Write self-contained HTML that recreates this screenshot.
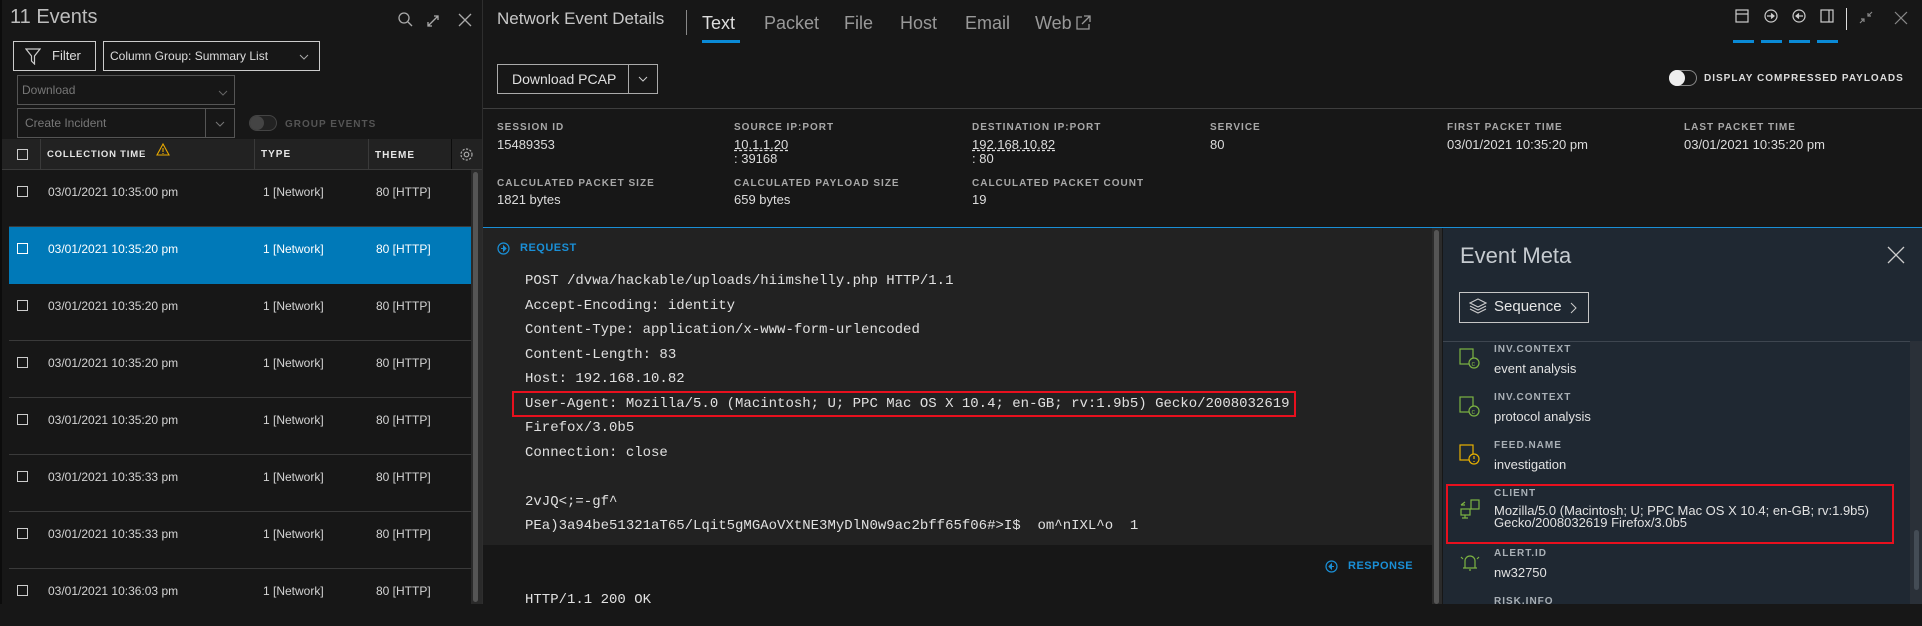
<!DOCTYPE html>
<html><head><meta charset="utf-8"><style>
*{margin:0;padding:0;box-sizing:border-box}
body{width:1922px;height:604px;background:#171717;overflow:hidden;position:relative;font-family:"Liberation Sans",sans-serif;color:#d0d0d0}
.a{position:absolute;white-space:nowrap}
.lbl{font-size:10px;font-weight:bold;letter-spacing:1px;color:#a8a8a8}
.val{font-size:13px;color:#dcdcdc}
.row{position:absolute;left:9px;width:462px;height:57px;border-bottom:1px solid #3a3a3a;font-size:12px;color:#d4d4d4}
.row span{position:absolute;top:15px}
.cb{position:absolute;left:8px;top:16px;width:11px;height:11px;border:1.5px solid #ccc}
.mono{font-family:"Liberation Mono",monospace;font-size:14px;letter-spacing:0;color:#e0e0e0}
.ml{font-size:10px;font-weight:bold;letter-spacing:1px;color:#a9b0b6}
.mv{font-size:13px;color:#e2e2e2}
.tab{font-size:18px;color:#999;top:13px}
</style></head><body>
<!-- left panel -->
<div class="a" style="left:0;top:0;width:2px;height:604px;background:#0c0c0c"></div>
<div class="a" style="left:10px;top:6px;font-size:20px;color:#bdbdbd;font-weight:300">11 Events</div>
<svg class="a" style="left:398px;top:12px" width="80" height="16" fill="none" stroke="#aaa" stroke-width="1.3"><circle cx="6" cy="6" r="5"/><path d="M10 10l4 4"/><path d="M30 14l10-10M36 4h4v4M30 10v4h4"/><path d="M61 2l12 12M73 2L61 14"/></svg>
<div class="a" style="left:13px;top:41px;width:83px;height:30px;border:1px solid #ccc"></div>
<svg class="a" style="left:25px;top:48px" width="16" height="17" fill="none" stroke="#ccc" stroke-width="1.2"><path d="M1 1h14L9.5 8v8L6.5 13V8z"/></svg>
<div class="a" style="left:52px;top:48px;font-size:13px;color:#ddd">Filter</div>
<div class="a" style="left:103px;top:41px;width:217px;height:30px;border:1px solid #ccc"></div>
<div class="a" style="left:110px;top:49px;font-size:12px;color:#ddd">Column Group: Summary List</div>
<svg class="a" style="left:299px;top:54px" width="10" height="6" fill="none" stroke="#aaa"><path d="M1 1l4 4 4-4"/></svg>
<div class="a" style="left:17px;top:75px;width:218px;height:30px;border:1px solid #555"></div>
<div class="a" style="left:22px;top:83px;font-size:12px;color:#777">Download</div>
<svg class="a" style="left:218px;top:90px" width="10" height="6" fill="none" stroke="#666"><path d="M1 1l4 4 4-4"/></svg>
<div class="a" style="left:17px;top:108px;width:218px;height:30px;border:1px solid #555"></div>
<div class="a" style="left:205px;top:108px;width:1px;height:30px;background:#555"></div>
<div class="a" style="left:25px;top:116px;font-size:12px;color:#777">Create Incident</div>
<svg class="a" style="left:215px;top:121px" width="10" height="6" fill="none" stroke="#777"><path d="M1 1l4 4 4-4"/></svg>
<div class="a" style="left:249px;top:115px;width:28px;height:16px;border-radius:8px;border:1px solid #444;background:#222"></div>
<div class="a" style="left:250px;top:116px;width:14px;height:14px;border-radius:7px;background:#444"></div>
<div class="a lbl" style="left:285px;top:119px;color:#555">GROUP EVENTS</div>
<div class="a" style="left:2px;top:139px;width:480px;height:31px;background:#222;border-bottom:1px solid #3a3a3a"></div>
<div class="a" style="left:17px;top:149px;width:11px;height:11px;border:1.5px solid #ccc"></div>
<div class="a" style="left:40px;top:139px;width:1px;height:30px;background:#3a3a3a"></div>
<div class="a" style="left:254px;top:139px;width:1px;height:30px;background:#3a3a3a"></div>
<div class="a" style="left:368px;top:139px;width:1px;height:30px;background:#3a3a3a"></div>
<div class="a" style="left:451px;top:139px;width:1px;height:30px;background:#0c0c0c"></div>
<div class="a lbl" style="left:47px;top:149px;color:#e6e6e6;font-size:9.5px;letter-spacing:.8px">COLLECTION TIME</div>
<svg class="a" style="left:156px;top:143px" width="14" height="13" fill="none" stroke="#e8a900" stroke-width="1.1"><path d="M7 1L13 12H1z M7 5v4M7 10v1"/></svg>
<div class="a lbl" style="left:261px;top:149px;color:#e6e6e6">TYPE</div>
<div class="a lbl" style="left:375px;top:150px;color:#e6e6e6">THEME</div>
<svg class="a" style="left:459px;top:147px" width="15" height="15" fill="none" stroke="#aaa" stroke-width="1.2"><circle cx="7.5" cy="7.5" r="2.3"/><circle cx="7.5" cy="7.5" r="5.5" stroke-dasharray="2.2 1.4"/></svg>
<div class="row" style="top:170px"><div class="cb"></div><span style="left:39px">03/01/2021 10:35:00 pm</span><span style="left:254px">1 [Network]</span><span style="left:367px">80 [HTTP]</span></div>
<div class="row" style="top:227px;background:#0079b8;color:#fff;border-bottom:none"><div class="cb" style="border-color:#fff"></div><span style="left:39px">03/01/2021 10:35:20 pm</span><span style="left:254px">1 [Network]</span><span style="left:367px">80 [HTTP]</span></div>
<div class="row" style="top:284px"><div class="cb"></div><span style="left:39px">03/01/2021 10:35:20 pm</span><span style="left:254px">1 [Network]</span><span style="left:367px">80 [HTTP]</span></div>
<div class="row" style="top:341px"><div class="cb"></div><span style="left:39px">03/01/2021 10:35:20 pm</span><span style="left:254px">1 [Network]</span><span style="left:367px">80 [HTTP]</span></div>
<div class="row" style="top:398px"><div class="cb"></div><span style="left:39px">03/01/2021 10:35:20 pm</span><span style="left:254px">1 [Network]</span><span style="left:367px">80 [HTTP]</span></div>
<div class="row" style="top:455px"><div class="cb"></div><span style="left:39px">03/01/2021 10:35:33 pm</span><span style="left:254px">1 [Network]</span><span style="left:367px">80 [HTTP]</span></div>
<div class="row" style="top:512px"><div class="cb"></div><span style="left:39px">03/01/2021 10:35:33 pm</span><span style="left:254px">1 [Network]</span><span style="left:367px">80 [HTTP]</span></div>
<div class="row" style="top:569px;border:none"><div class="cb"></div><span style="left:39px">03/01/2021 10:36:03 pm</span><span style="left:254px">1 [Network]</span><span style="left:367px">80 [HTTP]</span></div>
<div class="a" style="left:471px;top:170px;width:11px;height:434px;background:#2a2a2a"></div>
<div class="a" style="left:473px;top:172px;width:5px;height:430px;background:#555;border-radius:3px"></div>
<div class="a" style="left:482px;top:0;width:1px;height:604px;background:#2e2e2e"></div>

<!-- detail header -->
<div class="a" style="left:497px;top:9px;font-size:17px;color:#c8c8c8">Network Event Details</div>
<div class="a" style="left:686px;top:10px;width:1px;height:25px;background:#888"></div>
<div class="a tab" style="left:702px;color:#ddd">Text</div>
<div class="a" style="left:702px;top:40px;width:38px;height:3px;background:#0a8ad6"></div>
<div class="a tab" style="left:764px">Packet</div>
<div class="a tab" style="left:844px">File</div>
<div class="a tab" style="left:900px">Host</div>
<div class="a tab" style="left:965px">Email</div>
<div class="a tab" style="left:1035px">Web</div>
<svg class="a" style="left:1076px;top:15px" width="15" height="15" fill="none" stroke="#999" stroke-width="1.3"><path d="M6 2H1v12h12V9M8 1h6v6M14 1L6 9"/></svg>
<div class="a" style="left:497px;top:64px;width:161px;height:30px;border:1px solid #aaa"></div>
<div class="a" style="left:628px;top:64px;width:1px;height:30px;background:#aaa"></div>
<div class="a" style="left:512px;top:71px;font-size:14px;color:#e0e0e0">Download PCAP</div>
<svg class="a" style="left:638px;top:76px" width="10" height="6" fill="none" stroke="#ccc"><path d="M1 1l4 4 4-4"/></svg>
<!-- right icons -->
<svg class="a" style="left:1733px;top:8px" width="120" height="22" fill="none" stroke="#ccc" stroke-width="1.2"><rect x="3" y="2" width="12" height="12"/><path d="M3 6h12"/><circle cx="38" cy="8" r="6"/><path d="M34 8h6M38 5.5l3 2.5-3 2.5" fill="#ccc"/><circle cx="66" cy="8" r="6"/><path d="M70 8h-6M66 5.5l-3 2.5 3 2.5" fill="#ccc"/><rect x="88" y="2" width="12" height="12"/><path d="M96 2v12"/></svg>
<div class="a" style="left:1733px;top:40px;width:21px;height:3px;background:#0a8ad6"></div>
<div class="a" style="left:1761px;top:40px;width:21px;height:3px;background:#0a8ad6"></div>
<div class="a" style="left:1789px;top:40px;width:21px;height:3px;background:#0a8ad6"></div>
<div class="a" style="left:1817px;top:40px;width:21px;height:3px;background:#0a8ad6"></div>
<div class="a" style="left:1846px;top:8px;width:1px;height:22px;background:#ddd"></div>
<svg class="a" style="left:1858px;top:10px" width="52" height="16" fill="none" stroke="#888" stroke-width="1.2"><path d="M2 13l4-4M3 9h3v3M14 2l-4 4M10 3v3h3"/><path d="M37 2l12 12M49 2L37 14"/></svg>
<div class="a" style="left:1669px;top:70px;width:28px;height:16px;border-radius:8px;border:1px solid #888"></div>
<div class="a" style="left:1669px;top:70px;width:16px;height:16px;border-radius:8px;background:#eee"></div>
<div class="a lbl" style="left:1704px;top:73px;color:#ddd">DISPLAY COMPRESSED PAYLOADS</div>
<div class="a" style="left:483px;top:108px;width:1439px;height:1px;background:#3e3e3e"></div>
<!-- summary -->
<div class="a lbl" style="left:497px;top:122px">SESSION ID</div><div class="a val" style="left:497px;top:137px">15489353</div>
<div class="a lbl" style="left:734px;top:122px">SOURCE IP:PORT</div><div class="a val" style="left:734px;top:137px;text-decoration:underline dashed">10.1.1.20</div><div class="a val" style="left:734px;top:151px">: 39168</div>
<div class="a lbl" style="left:972px;top:122px">DESTINATION IP:PORT</div><div class="a val" style="left:972px;top:137px;text-decoration:underline dashed">192.168.10.82</div><div class="a val" style="left:972px;top:151px">: 80</div>
<div class="a lbl" style="left:1210px;top:122px">SERVICE</div><div class="a val" style="left:1210px;top:137px">80</div>
<div class="a lbl" style="left:1447px;top:122px">FIRST PACKET TIME</div><div class="a val" style="left:1447px;top:137px">03/01/2021 10:35:20 pm</div>
<div class="a lbl" style="left:1684px;top:122px">LAST PACKET TIME</div><div class="a val" style="left:1684px;top:137px">03/01/2021 10:35:20 pm</div>
<div class="a lbl" style="left:497px;top:178px">CALCULATED PACKET SIZE</div><div class="a val" style="left:497px;top:192px">1821 bytes</div>
<div class="a lbl" style="left:734px;top:178px">CALCULATED PAYLOAD SIZE</div><div class="a val" style="left:734px;top:192px">659 bytes</div>
<div class="a lbl" style="left:972px;top:178px">CALCULATED PACKET COUNT</div><div class="a val" style="left:972px;top:192px">19</div>
<div class="a" style="left:483px;top:227px;width:1439px;height:1px;background:#1a8fd6"></div>
<!-- request -->
<div class="a" style="left:483px;top:228px;width:949px;height:317px;background:#222"></div>
<div class="a" style="left:1432px;top:228px;width:10px;height:376px;background:#2b2b2b"></div>
<div class="a" style="left:1434px;top:230px;width:5px;height:374px;background:#555;border-radius:3px"></div>
<svg class="a" style="left:497px;top:242px" width="13" height="13"><circle cx="6.5" cy="6.5" r="5.5" fill="none" stroke="#1a8fd6" stroke-width="1.2"/><path d="M4 6.5h3M6.5 4l2.5 2.5L6.5 9z" stroke="#1a8fd6" fill="#1a8fd6"/></svg>
<div class="a" style="left:520px;top:242px;font-size:11px;font-weight:bold;color:#1a8fd6;letter-spacing:.5px">REQUEST</div>
<div class="a mono" style="left:525px;top:273px">POST /dvwa/hackable/uploads/hiimshelly.php HTTP/1.1</div>
<div class="a mono" style="left:525px;top:298px">Accept-Encoding: identity</div>
<div class="a mono" style="left:525px;top:322px">Content-Type: application/x-www-form-urlencoded</div>
<div class="a mono" style="left:525px;top:347px">Content-Length: 83</div>
<div class="a mono" style="left:525px;top:371px">Host: 192.168.10.82</div>
<div class="a mono" style="left:525px;top:396px">User-Agent: Mozilla/5.0 (Macintosh; U; PPC Mac OS X 10.4; en-GB; rv:1.9b5) Gecko/2008032619</div>
<div class="a" style="left:512px;top:391px;width:784px;height:26px;border:2px solid #e8101e"></div>
<div class="a mono" style="left:525px;top:420px">Firefox/3.0b5</div>
<div class="a mono" style="left:525px;top:445px">Connection: close</div>
<div class="a mono" style="left:525px;top:494px">2vJQ&lt;;=-gf^</div>
<div class="a mono" style="left:525px;top:518px">PEa)3a94be51321aT65/Lqit5gMGAoVXtNE3MyDlN0w9ac2bff65f06#&gt;I$&nbsp;&nbsp;om^nIXL^o&nbsp;&nbsp;1</div>
<svg class="a" style="left:1325px;top:560px" width="13" height="13"><circle cx="6.5" cy="6.5" r="5.5" fill="none" stroke="#1a8fd6" stroke-width="1.2"/><path d="M9 6.5H6M6.5 4L4 6.5 6.5 9z" stroke="#1a8fd6" fill="#1a8fd6"/></svg>
<div class="a" style="left:1348px;top:560px;font-size:11px;font-weight:bold;color:#1a8fd6;letter-spacing:.5px">RESPONSE</div>
<div class="a mono" style="left:525px;top:592px">HTTP/1.1 200 OK</div>
<!-- meta panel -->
<div class="a" style="left:1443px;top:228px;width:479px;height:376px;background:#1f2832"></div>
<div class="a" style="left:1460px;top:243px;font-size:22px;color:#c6cbd0;font-weight:300">Event Meta</div>
<svg class="a" style="left:1887px;top:246px" width="18" height="18" fill="none" stroke="#ccc" stroke-width="1.3"><path d="M1 1l16 16M17 1L1 17"/></svg>
<div class="a" style="left:1459px;top:292px;width:130px;height:31px;border:1px solid #c6c6c6"></div>
<svg class="a" style="left:1469px;top:298px" width="18" height="16" fill="none" stroke="#ccc" stroke-width="1.1"><path d="M9 1l8 4-8 4-8-4z M1 8l8 4 8-4 M1 11l8 4 8-4"/></svg>
<div class="a" style="left:1494px;top:298px;font-size:15px;color:#e6e6e6">Sequence</div>
<svg class="a" style="left:1570px;top:302px" width="8" height="12" fill="none" stroke="#ccc"><path d="M1 1l5 5-5 5"/></svg>
<div class="a" style="left:1443px;top:341px;width:467px;height:1px;background:#3e4650"></div>
<div class="a" style="left:1910px;top:341px;width:12px;height:263px;background:#2a3038"></div>
<div class="a" style="left:1914px;top:530px;width:5px;height:60px;background:#444c55;border-radius:3px"></div>
<svg class="a" style="left:1459px;top:348px" width="22" height="22" fill="none" stroke="#7cb342" stroke-width="1.2"><rect x="1" y="1" width="13" height="15"/><circle cx="15" cy="15" r="5" fill="#1f2832"/><text x="12.5" y="18" font-size="7" fill="#7cb342" stroke="none" font-family="Liberation Sans">c</text></svg>
<div class="a ml" style="left:1494px;top:344px">INV.CONTEXT</div><div class="a mv" style="left:1494px;top:361px">event analysis</div>
<svg class="a" style="left:1459px;top:396px" width="22" height="22" fill="none" stroke="#7cb342" stroke-width="1.2"><rect x="1" y="1" width="13" height="15"/><circle cx="15" cy="15" r="5" fill="#1f2832"/><text x="12.5" y="18" font-size="7" fill="#7cb342" stroke="none" font-family="Liberation Sans">c</text></svg>
<div class="a ml" style="left:1494px;top:392px">INV.CONTEXT</div><div class="a mv" style="left:1494px;top:409px">protocol analysis</div>
<svg class="a" style="left:1459px;top:444px" width="22" height="22" fill="none" stroke="#e8b000" stroke-width="1.2"><rect x="1" y="1" width="13" height="15"/><circle cx="15" cy="15" r="5" fill="#1f2832"/><path d="M15 12v3M15 17v1"/></svg>
<div class="a ml" style="left:1494px;top:440px">FEED.NAME</div><div class="a mv" style="left:1494px;top:457px">investigation</div>
<svg class="a" style="left:1459px;top:499px" width="22" height="20" fill="none" stroke="#7cb342" stroke-width="1.2"><rect x="12" y="1" width="8" height="9"/><rect x="2" y="10" width="9" height="6"/><path d="M6 16v3M3 19h6M2 6l4-3M2 6h4"/></svg>
<div class="a ml" style="left:1494px;top:488px">CLIENT</div>
<div class="a mv" style="left:1494px;top:505px;line-height:12px">Mozilla/5.0 (Macintosh; U; PPC Mac OS X 10.4; en-GB; rv:1.9b5)<br>Gecko/2008032619 Firefox/3.0b5</div>
<div class="a" style="left:1446px;top:484px;width:448px;height:60px;border:2px solid #e8101e"></div>
<svg class="a" style="left:1459px;top:552px" width="22" height="22" fill="none" stroke="#7cb342" stroke-width="1.2"><path d="M6 16V9a5 5 0 0 1 10 0v7zM4 16h14M10 18h2M2 5l2 2M20 5l-2 2"/></svg>
<div class="a ml" style="left:1494px;top:548px">ALERT.ID</div><div class="a mv" style="left:1494px;top:565px">nw32750</div>
<div class="a ml" style="left:1494px;top:596px">RISK.INFO</div>
</body></html>
